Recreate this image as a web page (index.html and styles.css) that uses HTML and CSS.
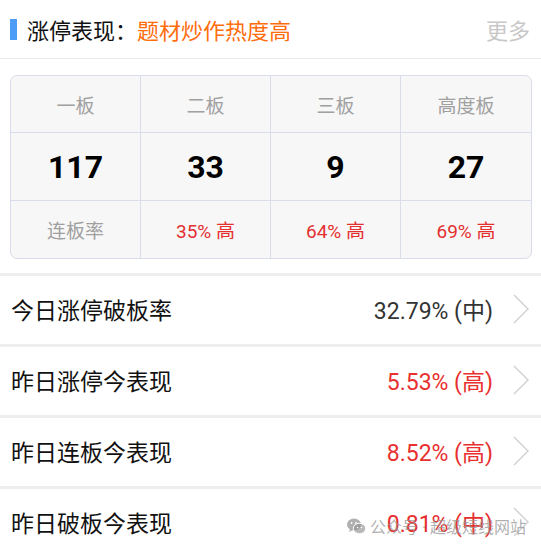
FILE: index.html
```html
<!DOCTYPE html>
<html>
  <head>
    <meta charset="utf-8" />
    <title>涨停表现</title>
    <link rel="stylesheet" href="styles.css">
  </head>
  <body>
    <div class="header">
      <span class="header-bar"></span>
      <span class="header-title">涨停表现：</span>
      <span class="header-topic">题材炒作热度高</span>
      <span class="header-more">更多</span>
    </div>

    <div class="board">
      <div class="cell label">一板</div>
      <div class="cell label">二板</div>
      <div class="cell label">三板</div>
      <div class="cell label">高度板</div>

      <div class="cell count">117</div>
      <div class="cell count">33</div>
      <div class="cell count">9</div>
      <div class="cell count">27</div>

      <div class="cell label">连板率</div>
      <div class="cell rate">35% 高</div>
      <div class="cell rate">64% 高</div>
      <div class="cell rate">69% 高</div>
    </div>

    <div class="list">
      <div class="row">
        <span class="row-name">今日涨停破板率</span>
        <span class="row-value">32.79% (中)</span>
        <svg class="chevron" width="16" height="30" viewBox="0 0 16 30">
          <polyline points="1,1 15,15 1,29" />
        </svg>
      </div>
      <div class="row">
        <span class="row-name">昨日涨停今表现</span>
        <span class="row-value up">5.53% (高)</span>
        <svg class="chevron" width="16" height="30" viewBox="0 0 16 30">
          <polyline points="1,1 15,15 1,29" />
        </svg>
      </div>
      <div class="row">
        <span class="row-name">昨日连板今表现</span>
        <span class="row-value up">8.52% (高)</span>
        <svg class="chevron" width="16" height="30" viewBox="0 0 16 30">
          <polyline points="1,1 15,15 1,29" />
        </svg>
      </div>
      <div class="row">
        <span class="row-name">昨日破板今表现</span>
        <span class="row-value up">0.81% (中)</span>
        <svg class="chevron" width="16" height="30" viewBox="0 0 16 30">
          <polyline points="1,1 15,15 1,29" />
        </svg>
      </div>
    </div>

    <div class="watermark">
      <svg class="wechat" width="19" height="17" viewBox="0 0 19 17">
        <ellipse cx="7" cy="6.5" rx="7" ry="6" />
        <path d="M3 11 L2 14 L6 12 Z" />
        <ellipse cx="12.5" cy="10.5" rx="6.2" ry="5.2" fill-opacity="0.9" stroke="#fff" stroke-width="1" />
        <circle cx="4.6" cy="5" r="0.9" fill="#fff" />
        <circle cx="9" cy="5" r="0.9" fill="#fff" />
        <circle cx="10.5" cy="9.5" r="0.8" fill="#fff" />
        <circle cx="14.5" cy="9.5" r="0.8" fill="#fff" />
      </svg>
      <span>公众号 · 超级短线网站</span>
    </div>
  </body>
</html>
```

FILE: styles.css
```css
body {
  margin: 0;
  background-color: #fff;
  font-family: Roboto, "Noto Sans CJK SC", sans-serif;
  color: #111;
  position: relative;
  height: 550px;
  overflow: hidden;
}

/* top title */
.header {
  display: flex;
  align-items: center;
  height: 58px;
  padding: 0 11px 0 10px;
  border-bottom: 1px solid #e8e8e8;
  font-size: 22px;
}

.header-bar {
  width: 7px;
  height: 21px;
  margin-right: 10px;
  background-color: #4d9cf6;
}

.header-title {
  color: #111;
}

.header-topic {
  color: #ff6d0c;
}

.header-more {
  margin-left: auto;
  color: #c8c8c8;
}

/* board counts */
.board {
  display: grid;
  grid-template-columns: repeat(4, 1fr);
  grid-template-rows: 57px 68px 57px;
  margin: 16px 9px 0 10px;
  border: 1px solid #d9dcea;
  border-radius: 7px;
  overflow: hidden;
  background-color: #f7f7f7;
}

.cell {
  display: flex;
  align-items: center;
  justify-content: center;
  border-right: 1px solid #d9dcea;
  border-bottom: 1px solid #d9dcea;
}

.cell:nth-child(4n) {
  border-right: none;
}

.cell:nth-child(n + 9) {
  border-bottom: none;
}

.label {
  font-size: 19px;
  color: #a0a0a0;
}

.count {
  font-size: 32px;
  font-weight: bold;
  color: #000;
}

.rate {
  font-size: 19px;
  color: #e3302f;
}

/* rows */
.list {
  margin-top: 14px;
}

.row {
  display: flex;
  align-items: center;
  box-sizing: border-box;
  height: 71px;
  padding: 0 12px 3px 11px;
  border-top: 3px solid #eeeeee;
  font-size: 23px;
}

.row-name {
  color: #111;
}

.row-value {
  margin-left: auto;
  margin-right: 20px;
  color: #333;
}

.row-value.up {
  color: #e8302f;
}

.chevron polyline {
  fill: none;
  stroke: #cfcfcf;
  stroke-width: 1.4;
}

/* watermark over last row */
.watermark {
  position: absolute;
  left: 347px;
  top: 514px;
  display: flex;
  align-items: center;
  gap: 4px;
  font-size: 16px;
  color: rgba(150, 150, 150, 0.75);
}

.wechat {
  fill: rgba(150, 150, 150, 0.75);
}
```
